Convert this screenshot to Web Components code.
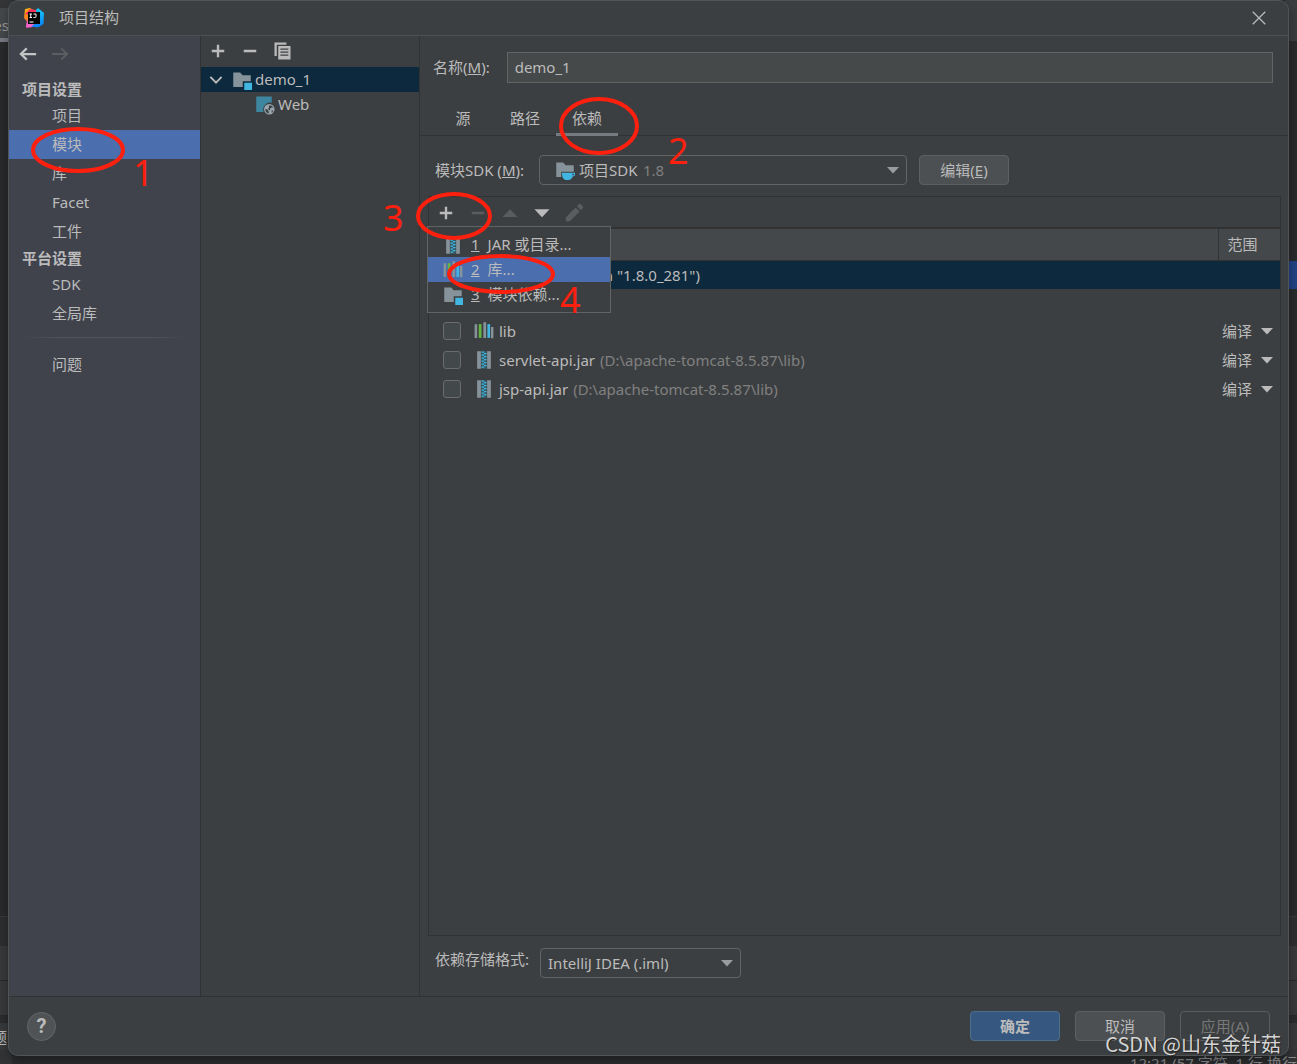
<!DOCTYPE html>
<html lang="zh-CN">
<head>
<meta charset="utf-8">
<title>项目结构</title>
<style>
  html, body { height: 100%; margin: 0; }
  body {
    position: relative;
    overflow: hidden;
    background: #2b2b2b;
    color: #bbbbbb;
    font: 15px/20px "Noto Sans", "Noto Sans CJK SC", sans-serif;
    --line: #323232;
    --panel: #3c3f41;
    --select: #4b6eaf;
    --row: #0d293e;
    --edge: #5e6060;
  }
</style>
</head>
<body>
<ide-backdrop></ide-backdrop>
<settings-dialog>
  <title-bar slot="title">项目结构</title-bar>
  <nav-panel slot="nav"></nav-panel>
  <module-tree slot="tree"></module-tree>
  <module-editor slot="editor"></module-editor>
  <dialog-footer slot="footer"></dialog-footer>
</settings-dialog>
<hand-marks></hand-marks>
<water-mark>CSDN @山东金针菇</water-mark>

<script>
const define = (name, html, setup) => customElements.define(name, class extends HTMLElement {
  connectedCallback() {
    if (this.shadowRoot) return;
    const root = this.attachShadow({ mode: 'open' });
    root.innerHTML = `<style>*{box-sizing:border-box}button,input,select{font:inherit;color:inherit;margin:0}</style>` + (typeof html === 'function' ? html(this) : html);
    if (setup) setup(this, root);
  }
});

const folder = '<path fill="#87939a" d="M1 2h5.5l2 2.2H15V9H8.6v4.5H1z"/>';
const ICONS = {
  plus: '<path d="M8 3v10M3 8h10" stroke="currentColor" stroke-width="1.9" fill="none"/>',
  minus: '<path d="M3 8h10" stroke="currentColor" stroke-width="1.9"/>',
  copy: '<path fill="currentColor" d="M2 1.2h9.500v1.800H3.800v9H2z"/><path fill="currentColor" fill-rule="evenodd" d="M5 4h9.800v10.800H5zM6.700 6v1h6.400V6zm0 2.400v1h6.400v-1zm0 2.400v1h6.400v-1z"/>',
  back: '<path d="M14.5 8H2.5M7 3.500 2.300 8 7 12.500" stroke="currentColor" stroke-width="1.8" fill="none"/>',
  forward: '<path d="M1.5 8h12M9 3.500 13.700 8 9 12.500" stroke="currentColor" stroke-width="1.6" fill="none"/>',
  up: '<path fill="currentColor" d="M2 11.2 8 5l6 6.2z"/>',
  down: '<path fill="currentColor" d="M2 5h12L8 11.4z"/>',
  pencil: '<path fill="currentColor" d="M1.500 14.500v-3.200l7.800-7.800 3.200 3.200-7.800 7.800zM10.300 2.500 12 .8q.7-.5 1.300 0l1.900 1.900q.5.7 0 1.300L13.500 5.700z"/>',
  chevron: '<path d="m3.500 5.500 4.500 4.600 4.500-4.600" stroke="currentColor" stroke-width="1.5" fill="none"/>',
  close: '<path d="m3 3 10 10M13 3 3 13" stroke="currentColor" stroke-width="1" fill="none"/>',
  module: folder + '<path fill="#40b6e0" d="M9.800 10.200H16V16H9.800z"/>',
  sdk: '<path fill="#87939a" d="M1 2h5.500l2 2.200H15V9.400H5v4.100H1z"/><path fill="#40b6e0" d="M5.600 10.200H16q1 2.200-1.800 3-.9 2.300-2.800 2.800H8.200q-2.800-1.300-2.600-5.800z"/><path fill="#3c3f41" d="M13.800 11h1.300q.3 1.100-1 1.400z"/>',
  web: '<path fill="#3e86a0" d="M1 1.200H13.400V6.200a5.600 5.600 0 0 0-6.500 7.400H1z"/><circle cx="11.400" cy="11.400" r="4.200" fill="#9aa7b0"/><path fill="#3c3f41" d="m8.300 11 1.800.8.800 1.200.2 1.800q-3-.4-2.800-3.800zM10.900 8.400l2.600.2 1 1.600-1.500-.2-.9 1-.3 1.400-1.500-1.200 1-1zM13.200 12.200l1.500.3-1.200 1.800z"/>',
  library: '<path fill="#87939a" d="M.5 2.500h2v11h-2zM7.500 1h2.200v12.500H7.500zM13.600 4.800h1.900v9h-1.900z"/><path fill="#62b543" d="M3.800 2.500H6v11H3.800z"/><path fill="#40b6e0" d="M10.700 2.500h2.200v11h-2.200z"/>',
  jar: '<path fill="#87939a" d="M2.500 1h3v14h-3zM10.500 1h3v14h-3z"/><path fill="#35606f" d="M6 1h4v14H6z"/><path stroke="#40b6e0" stroke-width=".9" fill="none" d="M6 1.700h2m0 1.200h2M6 4.100h2m0 1.200h2M6 6.500h2m0 1.200h2M6 8.900h2m0 1.200h2m-4 1.200h2m0 1.200h2m-4 1.200h2"/>',
};
define('ui-icon', el => `<style>:host{display:block;flex:none;width:20px;height:20px}svg{display:block;width:100%;height:100%}</style>
  <svg viewBox="0 0 16 16" aria-hidden="true">${ICONS[el.getAttribute('name')]}</svg>`);

/* The editor window that stays visible around the dialog. */
define('ide-backdrop', `<style>
  :host{position:absolute;inset:0;display:flex;justify-content:space-between;overflow:hidden;background:#2b2c2e;z-index:-1}
  .edge{display:flex;flex-direction:column;width:12px;overflow:hidden}
  .edge div{flex:none}
  .gap{height:8px;background:#333537}
  .tab{height:34px;background:#45484b;border-bottom:4px solid #777a80;display:flex;align-items:center;justify-content:flex-end;padding:4px 3px 0 0;color:#999}
  .edge .code{flex:1;background:#292a2b}
  .tool{height:30px;border-top:1px solid #38393b;background:#2d2e30}
  .bar{height:35px;background:#37393b;border-bottom:1px solid #292a2c}
  .name{height:28px;margin-top:6px;background:#37393b;border-top:1px solid #292a2c;display:flex;align-items:center;justify-content:flex-end;padding-right:5px}
  .foot{height:14px;background:#333436}
  .mark{height:28px;background:#214283}
  .head{height:41px;background:#3a3d3f}
  .top{height:220px;background:#292a2b}
  .status{position:absolute;right:0;bottom:-9px;white-space:nowrap;color:#8b8d8f}
</style>
<div class="edge"><div class="gap"></div><div class="tab">es</div><div class="code"></div><div class="tool"></div><div class="bar"></div><div class="bar"></div><div class="name">题</div><div class="foot"></div></div>
<div class="status">12:21 (57 字符, 1 行 换行</div>
<div class="edge"><div class="head"></div><div class="top"></div><div class="mark"></div><div class="code"></div><div class="tool"></div><div class="bar"></div><div class="bar"></div><div class="name"></div><div class="foot"></div></div>`);

define('settings-dialog', `<style>
  :host{display:flex;flex-direction:column;box-sizing:border-box;height:calc(100% - 8px);margin:0 8px;background:var(--panel);border:1px solid #515355;border-radius:10px;overflow:hidden;box-shadow:0 4px 10px rgba(0,0,0,.35)}
  main{flex:1;display:flex;min-height:0}
  ::slotted([slot=nav]){flex:none;width:192px}
  ::slotted([slot=tree]){flex:none;width:219px}
  ::slotted([slot=editor]){flex:1;min-width:0}
</style><slot name="title"></slot><main><slot name="nav"></slot><slot name="tree"></slot><slot name="editor"></slot></main><slot name="footer"></slot>`);

define('title-bar', `<style>
  :host{display:flex;align-items:center;box-sizing:border-box;height:35px;padding:0 19px 0 15px;border-bottom:1px solid #4e5052}
  .logo{width:20px;height:20px;margin-right:15px}
  h1{flex:1;margin:0;padding-bottom:2px;font:inherit}
  button{display:flex;padding:0;border:0;background:none}
</style>
<svg class="logo" viewBox="0 0 20 20" aria-hidden="true">
  <defs><linearGradient id="w" x2="0" y2="1"><stop stop-color="#fdb60d"/><stop offset=".5" stop-color="#fc801d"/><stop offset="1" stop-color="#f04fd0"/></linearGradient>
  <linearGradient id="c" x2="0" y2="1"><stop stop-color="#18c8f5"/><stop offset="1" stop-color="#087cfa"/></linearGradient></defs>
  <path fill="url(#w)" d="M1 1 6 0l6 4-3 15-7 .5 1-6L0 10z"/><path fill="#fe315d" d="M6 1l6 1 1 4-8 1-4-1z"/><path fill="#f765c8" d="M3 13l7 3.500-1 2.500-7 .5z"/>
  <path fill="url(#c)" d="m12 2 2-2 6 5-.5 11-5.500 3.500-7-1 6-4z"/>
  <path fill="#050505" d="M4 4h12v12H4z"/><path fill="#fff" d="M5.500 13.500h4v1h-4z"/>
  <path d="M5.500 6h2.500M6.750 6v3.500M5.500 9.500h2.500M9.500 6h2.500v2.500q0 1-1.200 1h-1.300" stroke="#fff" stroke-width="1" fill="none"/>
</svg><h1><slot></slot></h1><button aria-label="关闭"><ui-icon name="close"></ui-icon></button>`);

define('nav-panel', `<style>
  :host{display:flex;flex-direction:column;box-sizing:border-box;background:#40434c;border-right:1px solid var(--line)}
  .history{display:flex;gap:12px;height:41px;padding:8px 9px}
  .history button{display:flex;padding:0;border:0;background:none;color:#c2c4c6}
  .history button:disabled{color:#5c5d60}
  h2{margin:0;padding:0 13px;font-size:15px;line-height:24px;font-weight:700}
  a{display:block;padding:0 0 1px 43px;line-height:28px;color:inherit;text-decoration:none}
  a[aria-current]{background:var(--select)}
  hr{width:164px;height:1px;margin:9px 0 12px 13px;border:0;background:linear-gradient(90deg,transparent,#505359 20%,#505359 80%,transparent)}
</style>
<div class="history"><button aria-label="后退"><ui-icon name="back"></ui-icon></button><button aria-label="前进" disabled><ui-icon name="forward"></ui-icon></button></div>
<nav><h2>项目设置</h2><a href="#project">项目</a><a href="#modules" aria-current="page">模块</a><a href="#libraries">库</a><a href="#facets">Facet</a><a href="#artifacts">工件</a>
<h2>平台设置</h2><a href="#sdks">SDK</a><a href="#global">全局库</a><hr><a href="#problems">问题</a></nav>`);

define('module-tree', `<style>
  :host{display:flex;flex-direction:column;box-sizing:border-box;border-right:1px solid var(--line)}
  .tools{display:flex;gap:12px;height:31px;padding:5px 7px}
  .tools button{display:flex;padding:0;border:0;background:none}
  ul{margin:0;padding:0;list-style:none}
  .row{display:flex;align-items:center;height:25px;padding-left:5px}
  .row ui-icon{margin-right:3px}
  .row ui-icon[name=chevron]{margin-right:6px}
  .row span{padding-bottom:2px}
  .on{background:var(--row)}
  li li .row{padding-left:54px}
</style>
<div class="tools"><button aria-label="添加"><ui-icon name="plus"></ui-icon></button><button aria-label="移除"><ui-icon name="minus"></ui-icon></button><button aria-label="复制"><ui-icon name="copy"></ui-icon></button></div>
<ul role="tree"><li role="treeitem" aria-selected="true"><div class="row on"><ui-icon name="chevron"></ui-icon><ui-icon name="module"></ui-icon><span>demo_1</span></div>
<ul role="group"><li role="treeitem"><div class="row"><ui-icon name="web"></ui-icon><span>Web</span></div></li></ul></li></ul>`);

/* A push button; kind is "primary" or nothing. */
define('push-button', el => `<style>
  :host{display:block;width:90px}
  button{display:block;width:100%;height:30px;padding:0;border:1px solid #5e6060;border-radius:4px;background:#4c5052;line-height:26px}
  .primary{background:#365880;border-color:#4c708c;font-weight:700}
  button:disabled{background:none;border-color:#595c5e;color:#777777}
</style><button class="${el.getAttribute('kind') || ''}" ${el.hasAttribute('disabled') ? 'disabled' : ''}><slot></slot></button>`);

define('dependency-table', `<style>
  :host{display:flex;flex-direction:column;box-sizing:border-box;position:relative;border:1px solid var(--line)}
  .tools{display:flex;gap:12px;height:32px;padding:6px 7px;border-bottom:2px solid var(--line)}
  .tools button{display:flex;padding:0;border:0;background:none}
  .tools button:disabled{color:#5a5c5e}
  table{width:100%;border-collapse:collapse;table-layout:fixed}
  .c1{width:45px}.c3{width:62px}
  th{height:31px;padding:0 0 0 9px;background:#45484a;text-align:left;font-weight:400;border-bottom:1px solid var(--line)}
  th:last-child{border-left:1px solid var(--line)}
  td{height:29px;padding:0}
  .source td{height:27px}
  .on td{background:var(--row)}
  input{display:block;appearance:none;width:18px;height:18px;margin-left:14px;border:1px solid #6b6b6b;border-radius:3px;background:#43494a}
  label{display:flex;align-items:center;gap:5px}
  .path{color:#808080}
  .scope{display:grid;align-items:center}
  .scope>*{grid-area:1/1}
  .scope ui-icon{justify-self:end;margin-right:5px;width:16px;height:16px;pointer-events:none}
  select{appearance:none;width:100%;height:22px;padding:0 0 0 4px;border:0;background:none}
  .menu{position:absolute;top:29px;left:-2px;width:184px;padding:5px 0;border:1px solid #616365;background:var(--panel)}
  .menu button{display:flex;align-items:center;width:100%;height:25px;padding:0 0 0 15px;border:0;background:none;text-align:left}
  .menu .hot{background:var(--select)}
  .menu span{padding-bottom:2px}
  .menu u{margin:0 8px}
</style>
<div class="tools"><button aria-label="添加"><ui-icon name="plus"></ui-icon></button><button aria-label="移除" disabled><ui-icon name="minus"></ui-icon></button><button aria-label="上移" disabled><ui-icon name="up"></ui-icon></button><button aria-label="下移"><ui-icon name="down"></ui-icon></button><button aria-label="编辑" disabled><ui-icon name="pencil"></ui-icon></button></div>
<table><colgroup><col class="c1"><col><col class="c3"></colgroup>
<thead><tr><th></th><th></th><th>范围</th></tr></thead><tbody></tbody></table>
<div class="menu" role="menu"><button role="menuitem"><ui-icon name="jar"></ui-icon><span><u>1</u>JAR 或目录...</span></button><button role="menuitem" class="hot"><ui-icon name="library"></ui-icon><span><u>2</u>库...</span></button><button role="menuitem"><ui-icon name="module"></ui-icon><span><u>3</u>模块依赖...</span></button></div>`,
(el, root) => {
  const rows = [['library', 'lib', ''], ['jar', 'servlet-api.jar', '(D:\\apache-tomcat-8.5.87\\lib)'], ['jar', 'jsp-api.jar', '(D:\\apache-tomcat-8.5.87\\lib)']];
  root.querySelector('tbody').innerHTML = `<tr class="on"><td></td><td><label><ui-icon name="sdk"></ui-icon>1.8 (java version "1.8.0_281")</label></td><td></td></tr><tr class="source"><td></td><td></td><td></td></tr>` +
    rows.map(([icon, name, path], i) => `<tr><td><input type="checkbox" id="d${i}" aria-label="${name}"></td>
      <td><label for="d${i}"><ui-icon name="${icon}"></ui-icon>${name}${path ? ` <span class="path">${path}</span>` : ''}</label></td>
      <td><div class="scope"><select aria-label="范围"><option>编译</option></select><ui-icon name="down"></ui-icon></div></td></tr>`).join('');
});

define('module-editor', `<style>
  :host{display:flex;flex-direction:column;box-sizing:border-box}
  .name{display:flex;align-items:center;gap:17px;padding:16px 15px 0 13px}
  .name label{padding-bottom:2px}
  .name input{flex:1;min-width:0;height:31px;padding:0 7px 2px;border:1px solid #646464;background:#45494a;outline:0}
  .tabs{display:flex;height:53px;padding:17px 0 0 12px;border-bottom:1px solid var(--line)}
  .tabs button{min-width:62px;height:36px;padding:3px 16px 0;border:0;border-bottom:3px solid transparent;background:none;line-height:30px}
  .tabs [aria-selected=true]{border-color:#747a80}
  .sdk{display:flex;align-items:center;padding:19px 0 0 15px}
  .combo{display:grid;align-items:center}
  .combo>*{grid-area:1/1}
  .combo select{appearance:none;width:100%;height:30px;padding:0 7px;border:1px solid #646464;border-radius:4px;background:var(--panel)}
  .combo>ui-icon{justify-self:end;margin-right:6px;width:16px;height:16px;color:#9a9da0;pointer-events:none}
  .sdk .combo{width:368px;margin:0 12px 0 15px}
  .sdk select{padding-left:39px}
  .choice{display:flex;align-items:center;gap:68px;padding-left:16px;pointer-events:none;color:#808080}
  dependency-table{flex:1;margin:11px 7px 0 8px}
  .format{display:flex;padding:12px 0 18px 15px}
  .format label{line-height:23px}
  .format .combo{width:201px;margin-left:11px}
</style>
<div class="name"><label for="name">名称(<u>M</u>):</label><input id="name" value="demo_1"></div>
<div class="tabs" role="tablist"><button role="tab">源</button><button role="tab">路径</button><button role="tab" aria-selected="true">依赖</button></div>
<div class="sdk"><label for="sdk">模块SDK (<u>M</u>):</label><div class="combo"><select id="sdk"><option>项目SDK</option></select><span class="choice"><ui-icon name="sdk"></ui-icon>1.8</span><ui-icon name="down"></ui-icon></div><push-button>编辑(<u>E</u>)</push-button></div>
<dependency-table></dependency-table>
<div class="format"><label for="format">依赖存储格式:</label><div class="combo"><select id="format"><option>IntelliJ IDEA (.iml)</option></select><ui-icon name="down"></ui-icon></div></div>`);

define('dialog-footer', `<style>
  :host{display:flex;align-items:center;gap:15px;box-sizing:border-box;height:59px;padding:0 18px;border-top:1px solid var(--line)}
  .help{width:29px;height:29px;margin-right:auto;padding:0;border:1px solid #646667;border-radius:50%;background:#4f5355;font:700 20px/26px Roboto,sans-serif}
</style><button class="help" aria-label="帮助">?</button><push-button kind="primary">确定</push-button><push-button>取消</push-button><push-button disabled>应用(A)</push-button>`);

/* Red pen marks drawn over the dialog, numbered in the order of the steps. */
define('hand-marks', `<style>
  :host{position:absolute;inset:0;pointer-events:none;overflow:hidden}
  svg{display:block;width:100%;height:100%}
  ellipse{fill:none;stroke:#fe200f;stroke-width:4}
  text{font:36px "Noto Sans",sans-serif;fill:#fe200f}
</style><svg>
<ellipse cx="78" cy="150" rx="45" ry="21"/><ellipse cx="599" cy="126" rx="38" ry="27"/><ellipse cx="454" cy="216" rx="36" ry="22"/><ellipse cx="501" cy="274" rx="52" ry="18"/>
<text x="133" y="186">1</text><text x="668" y="164">2</text><text x="383" y="231">3</text><text x="560" y="313">4</text></svg>`);

define('water-mark', `<style>:host{position:absolute;right:16px;bottom:6px;font:20px/28px "Noto Sans CJK SC",sans-serif;color:#d4d4d4;text-shadow:1px 1px 1px #222;white-space:nowrap;pointer-events:none}</style><slot></slot>`);
</script>
</body>
</html>
